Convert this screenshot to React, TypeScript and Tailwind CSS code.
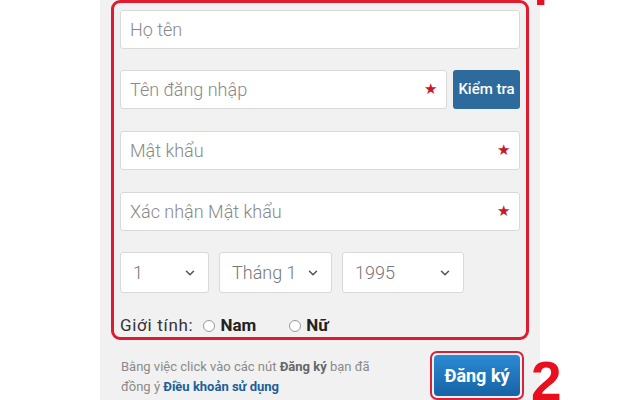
import { ChevronDown } from "lucide-react";

function Field({ label, star, className = "" }: { label: string; star?: boolean; className?: string }) {
  return (
    <div
      className={
        "flex h-[39px] items-center justify-between rounded-[3px] border border-[#d9d9d9] bg-white pl-[9px] pr-[9px] " +
        className
      }
    >
      <span className="text-[18px] font-light text-[#888]">{label}</span>
      {star && <span className="text-[15px] leading-none text-[#c8182c]">★</span>}
    </div>
  );
}

function Select({ value, width }: { value: string; width: string }) {
  return (
    <div
      className={
        "flex h-[41px] items-center justify-between rounded-[3px] border border-[#d9d9d9] bg-white pl-[12px] pr-[11px] " +
        width
      }
    >
      <span className="text-[18px] font-light text-[#777]">{value}</span>
      <ChevronDown size={14} strokeWidth={2.6} className="text-[#555]" />
    </div>
  );
}

function Radio({ label }: { label: string }) {
  return (
    <div className="flex items-center gap-[5px]">
      <span className="h-[12px] w-[12px] rounded-full border border-[#9a9a9a] bg-white" />
      <span className="text-[17px] font-bold text-[#222]">{label}</span>
    </div>
  );
}

export default function App() {
  return (
    <div className="relative h-[400px] w-[621px] overflow-hidden bg-white font-['Roboto',sans-serif]">
      <div className="ml-[100px] h-full w-[440px] bg-[#f1f1f1] pl-[11px] pr-[16px]">
        {/* khung đỏ số 1 */}
        <div className="w-[418px] rounded-[9px] border-[3px] border-[#e01b30] px-[6px] pt-[7px]">
          <Field label="Họ tên" />
          <div className="mt-[21px] flex gap-[6px]">
            <Field label="Tên đăng nhập" star className="flex-1" />
            <button className="h-[39px] w-[67px] rounded-[3px] bg-[#2d6b9c] text-[15px] font-medium text-white">
              Kiểm tra
            </button>
          </div>
          <Field label="Mật khẩu" star className="mt-[22px]" />
          <Field label="Xác nhận Mật khẩu" star className="mt-[22px]" />
          <div className="mt-[21px] flex gap-[10px]">
            <Select value="1" width="w-[89px]" />
            <Select value="Tháng 1" width="w-[113px]" />
            <Select value="1995" width="w-[122px]" />
          </div>
          <div className="mt-[22px] flex h-[22px] items-center">
            <span className="text-[17px] tracking-[0.7px] text-[#333]">Giới tính:</span>
            <div className="ml-[10px]">
              <Radio label="Nam" />
            </div>
            <div className="ml-[33px]">
              <Radio label="Nữ" />
            </div>
          </div>
        </div>

        {/* điều khoản + nút */}
        <div className="mt-[11px] flex items-start justify-between">
          <div className="mt-[6px] pl-[10px] text-[13px] leading-[20px] text-[#8a8a8a]">
            Bằng việc click vào các nút <b className="text-[#666]">Đăng ký</b> bạn đã
            <br />
            đồng ý <b className="text-[#1c5f99]">Điều khoản sử dụng</b>
          </div>
          <div className="rounded-[7px] border-2 border-[#d9213a] p-[2px]">
            <button className="h-[41px] w-[86px] rounded-[4px] bg-gradient-to-b from-[#2a8ad3] to-[#1763a6] text-[18px] font-bold text-white">
              Đăng ký
            </button>
          </div>
        </div>
      </div>

      {/* nhãn chú thích */}
      <span className="absolute left-[524px] top-[-38px] font-['Roboto',sans-serif] text-[52px] font-bold leading-none text-[#e8101f]">
        1
      </span>
      <span className="absolute left-[531px] top-[354px] font-['Liberation_Sans',sans-serif] text-[55px] font-bold leading-none text-[#e8101f]">
        2
      </span>
    </div>
  );
}
